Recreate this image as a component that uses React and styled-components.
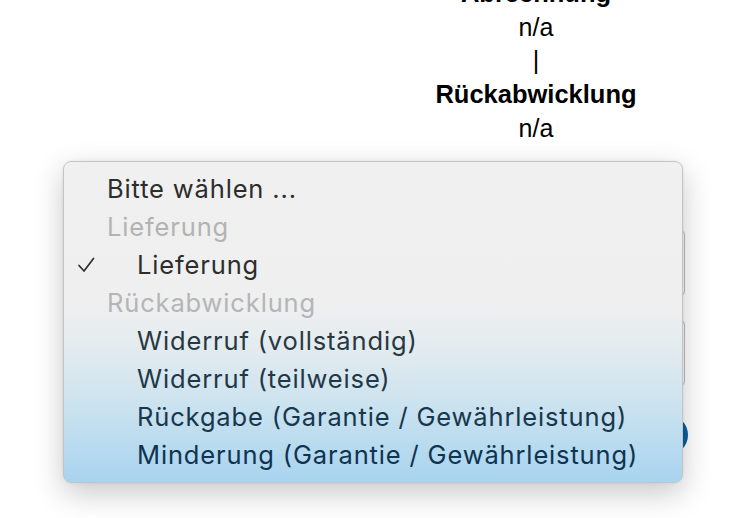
import React from "react"
import styled, { createGlobalStyle } from "styled-components"

const GlobalStyle = createGlobalStyle`
  html, body {
    margin: 0;
    padding: 0;
    background: #ffffff;
    overflow: hidden;
  }
  body {
    font-family: "Liberation Sans", Arial, sans-serif;
  }
`

const Page = styled.div`
  position: relative;
  width: 756px;
  height: 518px;
  overflow: hidden;
  background: #ffffff;
`

const Content = styled.div`
  display: flex;
  flex-direction: column;
  align-items: flex-end;
  padding-right: 71px;
  margin-top: -24px;
`

const InfoColumn = styled.div`
  width: 298px;
  display: flex;
  flex-direction: column;
  align-items: center;
  font-size: 25px;
  line-height: 33px;
  color: #000;
`

const InfoLabel = styled.div`
  font-weight: 700;
  font-size: 25.5px;
  line-height: 35px;
`

const InfoValue = styled.div``

const Form = styled.div`
  width: 615px;
  display: flex;
  flex-direction: column;
  gap: 22px;
  margin-top: 84px;
`

const Field = styled.div`
  height: ${(p) => p.h}px;
  border: 1px solid #bdbdbd;
  border-radius: 6px;
  background: #fff;
  box-sizing: border-box;
`

const SubmitButton = styled.button`
  align-self: flex-end;
  margin-top: 6px;
  margin-right: -3px;
  width: 160px;
  height: 40px;
  border: none;
  border-radius: 20px;
  background: #0c5ea3;
`

const Menu = styled.div`
  position: absolute;
  left: 63px;
  top: 161px;
  width: 620px;
  height: 322px;
  box-sizing: border-box;
  padding: 8px 0 10px;
  border: 1px solid #c4c4c4;
  border-radius: 8px;
  background: linear-gradient(
    180deg,
    #f0f0f0 0%,
    #efeff0 45%,
    #e3ebef 58%,
    #cde3ef 75%,
    #a8d4ef 100%
  );
  box-shadow: 0 10px 30px rgba(0, 0, 0, 0.22), 0 0 3px rgba(0, 0, 0, 0.08);
  font-family: Inter, "Noto Sans", sans-serif;
  font-size: 25.5px;
`

const Item = styled.div`
  position: relative;
  height: 38px;
  line-height: 38px;
  padding-left: ${(p) => (p.indent ? 73 : 43)}px;
  color: ${(p) => p.tone || "#2d2d2d"};
  white-space: nowrap;
  letter-spacing: 0.85px;
`

const Check = styled.svg`
  position: absolute;
  left: 13px;
  top: 11px;
  width: 18px;
  height: 16px;
`

const Checkmark = () => (
  <Check viewBox="0 0 18 16">
    <polyline
      points="2,8.5 7,14 16.5,1.5"
      fill="none"
      stroke="#2d2d2d"
      strokeWidth="1.7"
      strokeLinecap="round"
      strokeLinejoin="round"
    />
  </Check>
)

const options = [
  { label: "Bitte wählen ..." },
  { label: "Lieferung", tone: "#b3b3b3" },
  { label: "Lieferung", indent: true, checked: true },
  { label: "Rückabwicklung", tone: "#b3b6b8" },
  { label: "Widerruf (vollständig)", indent: true, tone: "#283841" },
  { label: "Widerruf (teilweise)", indent: true, tone: "#213847" },
  { label: "Rückgabe (Garantie / Gewährleistung)", indent: true, tone: "#17374d" },
  { label: "Minderung (Garantie / Gewährleistung)", indent: true, tone: "#0f3350" },
]

export default function App() {
  return (
    <Page>
      <GlobalStyle />
      <Content>
        <InfoColumn>
          <InfoLabel>Abrechnung</InfoLabel>
          <InfoValue>n/a</InfoValue>
          <InfoValue>|</InfoValue>
          <InfoLabel>Rückabwicklung</InfoLabel>
          <InfoValue>n/a</InfoValue>
        </InfoColumn>
        <Form>
          <Field h={68} />
          <Field h={68} />
          <SubmitButton />
        </Form>
      </Content>
      <Menu>
        {options.map((o, i) => (
          <Item key={i} indent={o.indent} tone={o.tone}>
            {o.checked && <Checkmark />}
            {o.label}
          </Item>
        ))}
      </Menu>
    </Page>
  )
}
